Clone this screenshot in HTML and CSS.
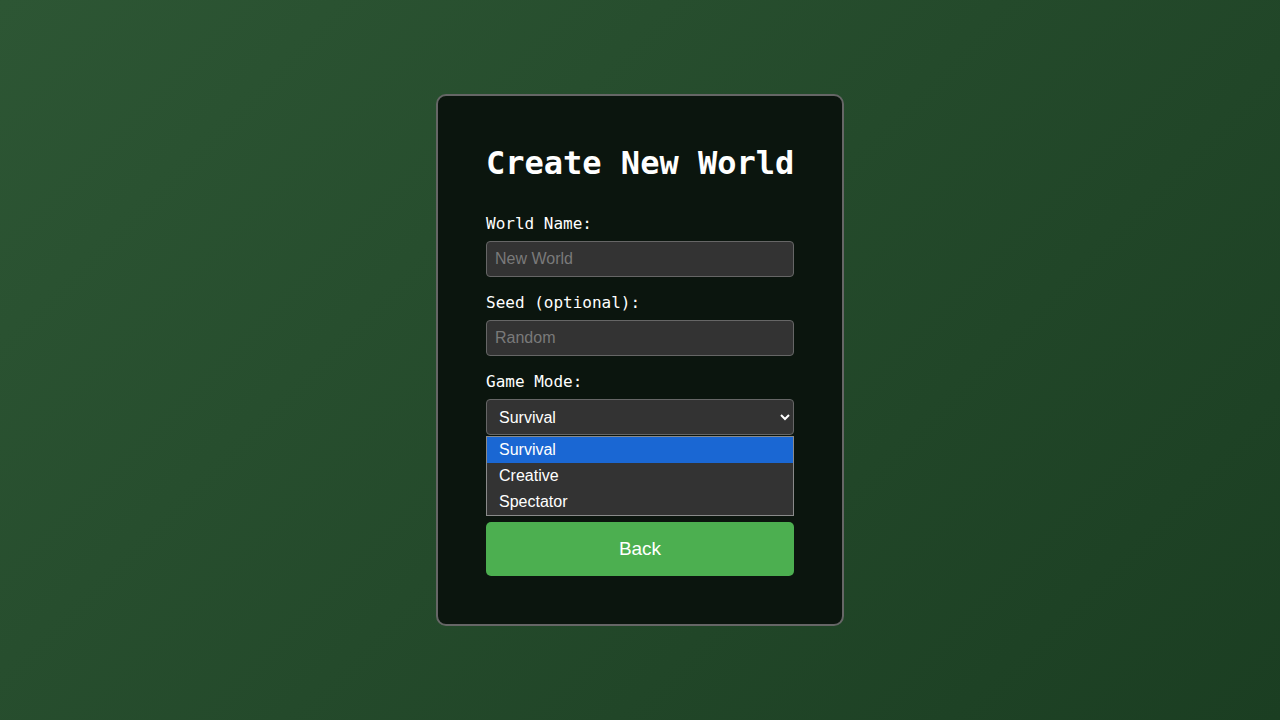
FILE: index.html
```html
<!DOCTYPE html>
<html lang="en">
<head>
<meta charset="utf-8">
<title>Create New World</title>
<link rel="stylesheet" href="styles.css">
</head>
<body>
<main class="screen">
  <section class="card">
    <h1 class="title">Create New World</h1>
    <div class="group">
      <label class="label" for="name">World Name:</label>
      <input class="field" id="name" type="text" placeholder="New World">
    </div>
    <div class="group">
      <label class="label" for="seed">Seed (optional):</label>
      <input class="field" id="seed" type="text" placeholder="Random">
    </div>
    <div class="group group-select">
      <label class="label" for="mode">Game Mode:</label>
      <div class="select-wrap">
        <select class="field select" id="mode">
          <option>Survival</option>
          <option>Creative</option>
          <option>Spectator</option>
        </select>
        <ul class="popup">
          <li class="opt opt-active">Survival</li>
          <li class="opt">Creative</li>
          <li class="opt">Spectator</li>
        </ul>
      </div>
    </div>
    <button class="btn" type="button">Back</button>
  </section>
</main>
</body>
</html>
```
FILE: styles.css
```css
* { box-sizing: border-box; }
html, body { margin: 0; height: 100%; }
body {
  background: linear-gradient(135deg, #2d5634 0%, #1b3e22 100%);
  font-family: "Liberation Sans", Arial, sans-serif;
  color: #fff;
}
.screen {
  height: 720px;
  display: flex;
  align-items: center;
  justify-content: center;
}
.card {
  width: 408px;
  height: 532px;
  padding: 48px;
  background: #0b150e;
  border: 2px solid #666;
  border-radius: 10px;
  display: flex;
  flex-direction: column;
}
.title {
  margin: 1px 0 32px;
  font-family: "DejaVu Sans Mono", monospace;
  font-size: 32px;
  font-weight: bold;
  line-height: 37px;
  white-space: nowrap;
}
.group { margin-bottom: 16px; display: flex; flex-direction: column; }
.label {
  display: block;
  font-family: "DejaVu Sans Mono", monospace;
  font-size: 16px;
  line-height: 19px;
  margin-bottom: 8px;
  color: #fff;
}
.field {
  width: 100%;
  height: 36px;
  padding: 8px;
  background: #333;
  border: 1px solid #666;
  border-radius: 4px;
  color: #fff;
  font-family: "Liberation Sans", Arial, sans-serif;
  font-size: 16px;
  outline: none;
}
.field::placeholder { color: #7a7a7a; }
.select { color-scheme: dark; padding: 8px 8px; }
.select-wrap { position: relative; }
.popup {
  position: absolute;
  left: 0;
  right: 0;
  top: 37px;
  margin: 0;
  padding: 0;
  list-style: none;
  background: #333;
  border: 1px solid #8a8a8a;
  z-index: 5;
}
.opt {
  height: 26px;
  line-height: 26px;
  padding-left: 12px;
  font-size: 16px;
  color: #fff;
}
.opt-active { background: #1a67d3; }
.group-select { margin-bottom: 87px; }
.btn {
  width: 100%;
  height: 54px;
  border: none;
  border-radius: 5px;
  background: #4caf50;
  color: #fff;
  font-family: "Liberation Sans", Arial, sans-serif;
  font-size: 19px;
  cursor: pointer;
}
```
